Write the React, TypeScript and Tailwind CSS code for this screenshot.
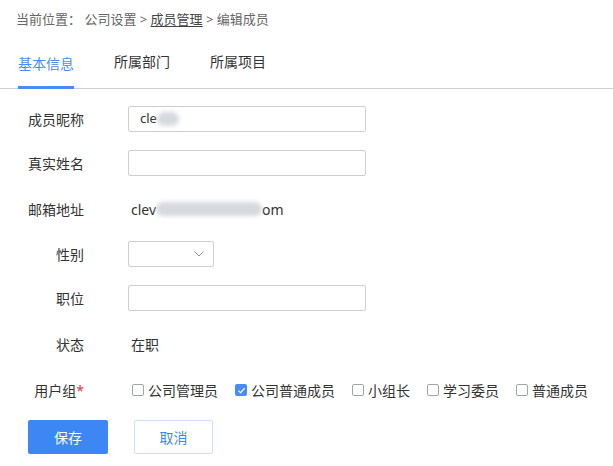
import React from "react";

const font = { fontFamily: '"Noto Sans", "Noto Sans CJK SC", sans-serif' };

function Label({ children }: { children: React.ReactNode }) {
  return <div className="w-[84px] shrink-0 text-right text-[14px] text-[#333]">{children}</div>;
}

function Blur({ w }: { w: number }) {
  return (
    <span
      className="inline-block h-[14px] rounded-full bg-[#d6d9de] blur-[2px] align-middle"
      style={{ width: w }}
    />
  );
}

function Check({ checked, label }: { checked?: boolean; label: string }) {
  return (
    <div className="flex items-center">
      {checked ? (
        <span className="flex h-[12px] w-[12px] items-center justify-center rounded-[2px] bg-[#4a8cf5]">
          <svg width="9" height="9" viewBox="0 0 10 10" fill="none">
            <path d="M1.5 5.2 L4 7.5 L8.5 2.5" stroke="white" strokeWidth="1.3" fill="none" />
          </svg>
        </span>
      ) : (
        <span className="h-[12px] w-[12px] rounded-[2px] border border-[#a0a4ab] bg-white" />
      )}
      <span className="ml-[4px] text-[14px] text-[#333]">{label}</span>
    </div>
  );
}

export default function App() {
  return (
    <div className="h-[466px] w-[613px] bg-white" style={font}>
      <div className="flex h-[38px] items-center pl-[16px] pt-[1px] text-[13px] text-[#666]">
        当前位置：&nbsp;公司设置 &gt;&nbsp;<span className="text-[#444] underline underline-offset-2">成员管理</span>&nbsp;&gt; 编辑成员
      </div>
      <div className="flex h-[51px] items-end border-b border-[#d0d0d0]">
        <div className="ml-[18px] flex h-[51px] flex-col justify-center border-b-[3px] border-[#4a8cf5] pt-[2px] text-[14px] text-[#4a8cf5] -mb-[1px]">
          基本信息
        </div>
        <div className="ml-[40px] flex h-[51px] items-center pb-[2px] text-[14px] text-[#333]">所属部门</div>
        <div className="ml-[40px] flex h-[51px] items-center pb-[2px] text-[14px] text-[#333]">所属项目</div>
      </div>

      <div className="flex flex-col">
        <div className="mt-[17px] flex h-[26px] items-center">
          <Label>成员昵称</Label>
          <div className="ml-[44px] flex h-[26px] w-[238px] items-center rounded-[2px] border border-[#cfcfcf] pl-[11px] text-[13px] text-[#333]">
            cle<Blur w={22} />
          </div>
        </div>
        <div className="mt-[18px] flex h-[26px] items-center">
          <Label>真实姓名</Label>
          <div className="ml-[44px] h-[26px] w-[238px] rounded-[2px] border border-[#cfcfcf]" />
        </div>
        <div className="mt-[20px] flex h-[26px] items-center">
          <Label>邮箱地址</Label>
          <div className="ml-[47px] flex items-center text-[14px] text-[#333]">
            clev<Blur w={106} />om
          </div>
        </div>
        <div className="mt-[19px] flex h-[26px] items-center">
          <Label>性别</Label>
          <div className="ml-[44px] flex h-[26px] w-[86px] items-center justify-end rounded-[2px] border border-[#cfcfcf] pr-[9px]">
            <svg width="10" height="6" viewBox="0 0 10 6" fill="none">
              <path d="M0.5 0.5 L5 5 L9.5 0.5" stroke="#8a93a6" strokeWidth="1" />
            </svg>
          </div>
        </div>
        <div className="mt-[18px] flex h-[26px] items-center">
          <Label>职位</Label>
          <div className="ml-[44px] h-[26px] w-[238px] rounded-[2px] border border-[#cfcfcf]" />
        </div>
        <div className="mt-[20px] flex h-[26px] items-center">
          <Label>状态</Label>
          <div className="ml-[47px] text-[14px] text-[#333]">在职</div>
        </div>
        <div className="mt-[20px] flex h-[26px] items-center">
          <Label>
            用户组<span className="text-[#e33]">*</span>
          </Label>
          <div className="ml-[48px] flex items-center gap-[17px]">
            <Check label="公司管理员" />
            <Check checked label="公司普通成员" />
            <Check label="小组长" />
            <Check label="学习委员" />
            <Check label="普通成员" />
          </div>
        </div>
        <div className="mt-[17px] flex items-center">
          <button className="ml-[28px] flex h-[34px] w-[80px] items-center justify-center rounded-[2px] bg-[#3d87f5] text-[14px] text-white">
            保存
          </button>
          <button className="ml-[26px] flex h-[34px] w-[79px] items-center justify-center rounded-[2px] border border-[#cfe0fb] bg-white text-[14px] text-[#3d87f5]">
            取消
          </button>
        </div>
      </div>
    </div>
  );
}
